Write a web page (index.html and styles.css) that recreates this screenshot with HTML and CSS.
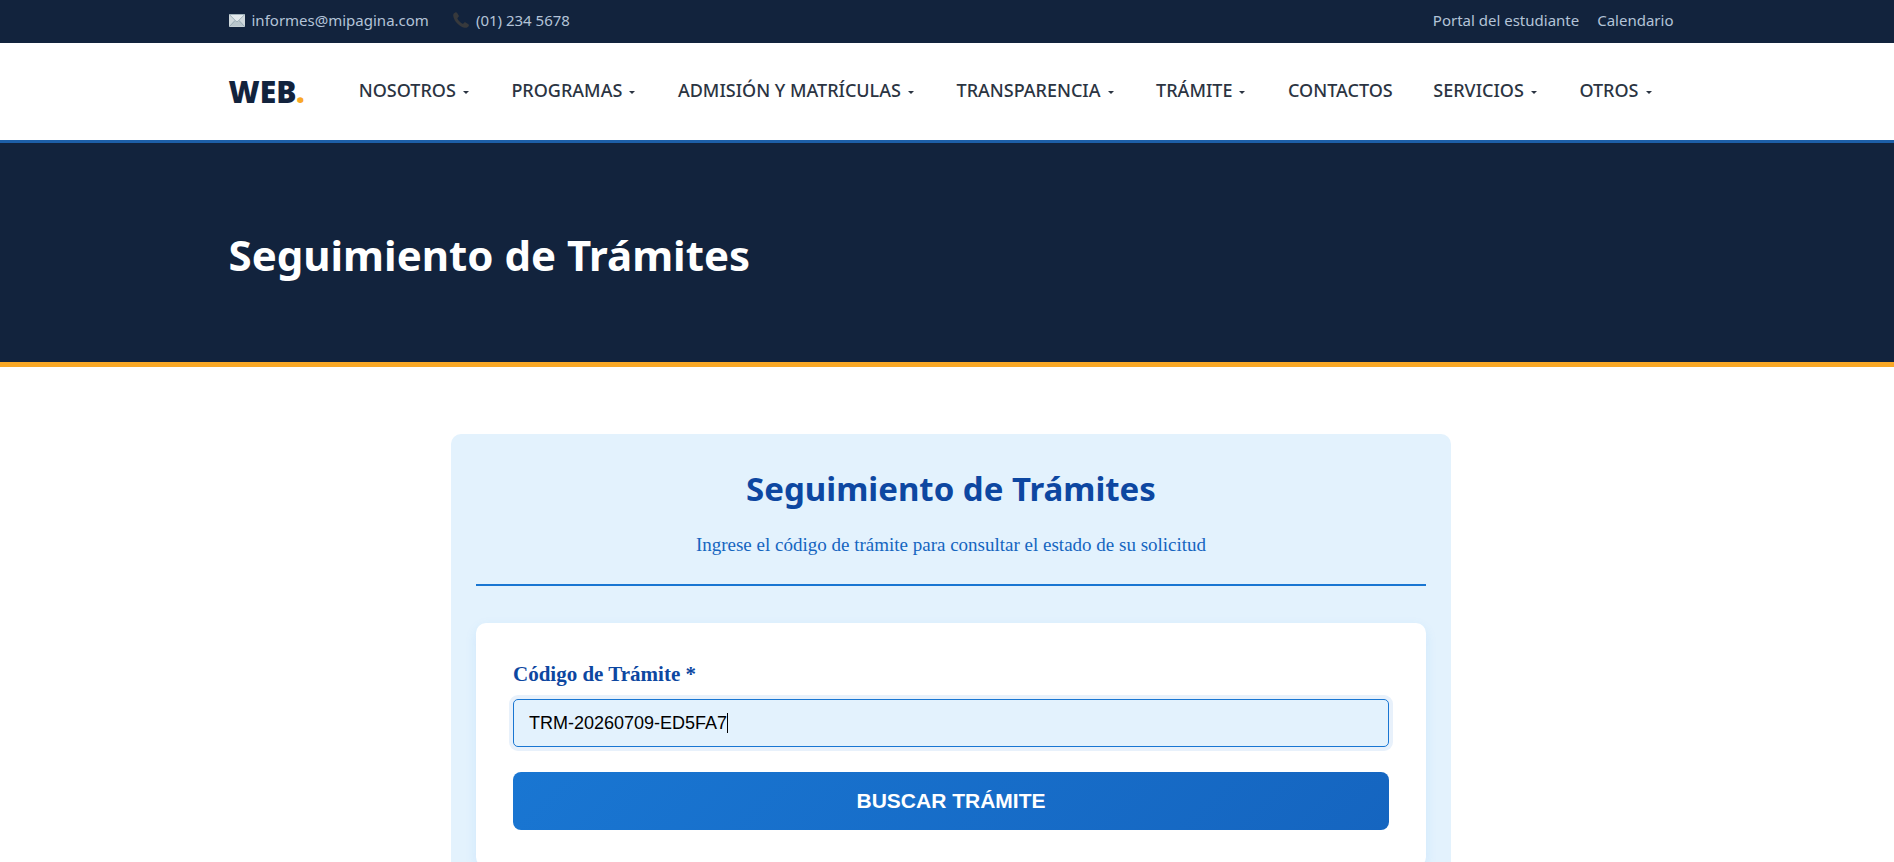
FILE: index.html
```
<!DOCTYPE html>
<html lang="es">
<head>
    <meta charset="UTF-8">
    <meta name="viewport" content="width=device-width, initial-scale=1.0">
    <title>Seguimiento de Trámites</title>
    <link rel="stylesheet" href="styles.css">
</head>
<body>
    <div class="top-bar">
        <div class="container">
            <div class="contact">
                <a href="mailto:informes@mipagina.com">
                    <svg class="icon" viewBox="0 0 16 13" aria-hidden="true">
                        <rect width="16" height="13" rx="1" fill="#cfd8dc"/>
                        <path d="M0 12.5 6 6h4l6 6.5z" fill="#b9c6cc"/>
                        <path d="M.5 12.5 6 6.500M15.500 12.500 10 6.500" stroke="#90a4ae" stroke-width=".8"/>
                        <path d="M.3.500h15.400L9 7.200q-1 .9-2 0z" fill="#e3eaed" stroke="#90a4ae" stroke-width=".8"/>
                    </svg>
                    <span>informes@mipagina.com</span>
                </a>
                <a href="tel:012345678">
                    <svg class="icon phone" viewBox="0 0 16 16" aria-hidden="true">
                        <path d="M2.300.4C.7 1-.1 2.300.3 4.200c1 5.300 6.200 10.400 11.300 11.500 1.900.4 3.400-.3 4.200-2 .3-.6.100-1-.4-1.400l-2.700-1.900c-.5-.3-1-.2-1.400.2l-.9 1c-.3.300-.6.300-1 .1C7.300 10.600 5.500 8.800 4.500 6.700c-.2-.4-.1-.7.200-1l.9-.9c.4-.4.400-.9.100-1.400L4 .8C3.600.3 3 .1 2.300.4z" fill="#37393c"/>
                    </svg>
                    <span>(01) 234 5678</span>
                </a>
            </div>
            <div class="top-links">
                <a href="#">Portal del estudiante</a>
                <a href="#">Calendario</a>
            </div>
        </div>
    </div>

    <header class="header">
        <div class="container">
            <a href="#" class="logo">WEB<span>.</span></a>
            <nav class="menu">
                <a href="#" class="dropdown">NOSOTROS</a>
                <a href="#" class="dropdown">PROGRAMAS</a>
                <a href="#" class="dropdown">ADMISIÓN Y MATRÍCULAS</a>
                <a href="#" class="dropdown">TRANSPARENCIA</a>
                <a href="#" class="dropdown">TRÁMITE</a>
                <a href="#">CONTACTOS</a>
                <a href="#" class="dropdown">SERVICIOS</a>
                <a href="#" class="dropdown">OTROS</a>
            </nav>
        </div>
    </header>

    <section class="hero">
        <div class="container">
            <h1>Seguimiento de Trámites</h1>
        </div>
    </section>

    <main class="main">
        <div class="tracking">
            <div class="tracking-header">
                <h2>Seguimiento de Trámites</h2>
                <p>Ingrese el código de trámite para consultar el estado de su solicitud</p>
            </div>
            <form class="tracking-form">
                <label for="codigo">Código de Trámite *</label>
                <input type="text" id="codigo" value="TRM-20260709-ED5FA7" autocomplete="off" required>
                <button type="submit">BUSCAR TRÁMITE</button>
            </form>
        </div>
    </main>
</body>
</html>
```
FILE: styles.css
```
* {
    box-sizing: border-box;
}

body {
    margin: 0;
    background-color: #fff;
    font-family: "Segoe UI", "Noto Sans", sans-serif;
    font-size: 16px;
    overflow-x: hidden;
}

a {
    color: inherit;
    text-decoration: none;
}

.container {
    display: flex;
    align-items: center;
    justify-content: space-between;
    width: 100%;
    max-width: 1445px;
    margin: 0 auto;
}

.top-bar,
.header,
.hero,
.main {
    padding-left: 8px;
}

/* top bar */
.top-bar {
    background-color: #12233d;
    color: #b4c3d8;
    font-size: 15px;
    line-height: 20px;
    padding-top: 10px;
    padding-bottom: 13px;
}

.contact {
    display: flex;
    gap: 24px;
}

.contact a {
    display: flex;
    align-items: center;
    gap: 7px;
}

.icon {
    width: 16px;
    height: 13px;
}

.phone {
    height: 16px;
}

.top-links {
    display: flex;
    gap: 18px;
}

/* header */
.header {
    background-color: #fff;
    border-bottom: 3px solid #1d5fa8;
    padding-top: 24px;
    padding-bottom: 24px;
}

.logo {
    color: #12233d;
    font-size: 30px;
    font-weight: 900;
    line-height: 49px;
}

.logo span {
    color: #f9a826;
}

.menu {
    display: flex;
    flex: 1;
    justify-content: space-between;
    margin-left: 34px;
    padding-bottom: 4px;
}

.menu a {
    color: #2b3442;
    font-size: 18px;
    font-weight: 500;
    line-height: 24px;
    padding: 0 20px;
    white-space: nowrap;
}

.dropdown::after {
    content: "";
    display: inline-block;
    margin: 0 2px 3px 7px;
    border: 3px solid transparent;
    border-top-color: #2b3442;
    border-bottom: 0;
}

/* hero */
.hero {
    background-color: #12233d;
    border-bottom: 5px solid #f9a826;
    padding-top: 82px;
    padding-bottom: 78px;
}

.hero h1 {
    margin: 0;
    color: #fff;
    font-size: 42px;
    line-height: 59px;
}

/* form */
.main {
    padding-top: 67px;
    padding-bottom: 67px;
}

.tracking {
    max-width: 1000px;
    margin: 0 auto;
    padding: 25px;
    background-color: #e3f2fd;
    border-radius: 10px;
    font-family: Georgia, "Liberation Serif", serif;
}

.tracking-header {
    border-bottom: 2px solid #1976d2;
    margin-bottom: 37px;
    padding-bottom: 26px;
    text-align: center;
}

.tracking-header h2 {
    margin: 0 0 12px;
    color: #0d47a1;
    font-family: "Segoe UI", "Noto Sans", sans-serif;
    font-size: 33px;
    line-height: 60px;
}

.tracking-header p {
    margin: 0;
    color: #1565c0;
    font-size: 19px;
    line-height: 27px;
}

.tracking-form {
    padding: 37px;
    background-color: #fff;
    border-radius: 10px;
    box-shadow: 0 4px 12px rgba(33, 150, 243, 0.1);
}

.tracking-form label {
    display: block;
    margin-bottom: 10px;
    color: #0d47a1;
    font-size: 21px;
    font-weight: bold;
    line-height: 29px;
}

/* the 1px gradient is the text cursor after the code */
.tracking-form input {
    display: block;
    width: 100%;
    height: 48px;
    margin-bottom: 25px;
    padding: 0 15px;
    border: 1px solid #1976d2;
    border-radius: 5px;
    outline: none;
    background: linear-gradient(#000, #000) 213px center / 1px 20px no-repeat #e3f2fd;
    box-shadow: 0 0 0 4px #e8f1fb;
    color: #000;
    font-family: "Liberation Sans", Arial, sans-serif;
    font-size: 18px;
}

.tracking-form input:focus {
    background-image: none;
}

.tracking-form button {
    display: block;
    width: 100%;
    padding: 17px;
    border: none;
    border-radius: 8px;
    background: linear-gradient(135deg, #1976d2, #1565c0);
    color: #fff;
    cursor: pointer;
    font-family: "Liberation Sans", Arial, sans-serif;
    font-size: 21px;
    font-weight: bold;
    line-height: 24px;
}
```
